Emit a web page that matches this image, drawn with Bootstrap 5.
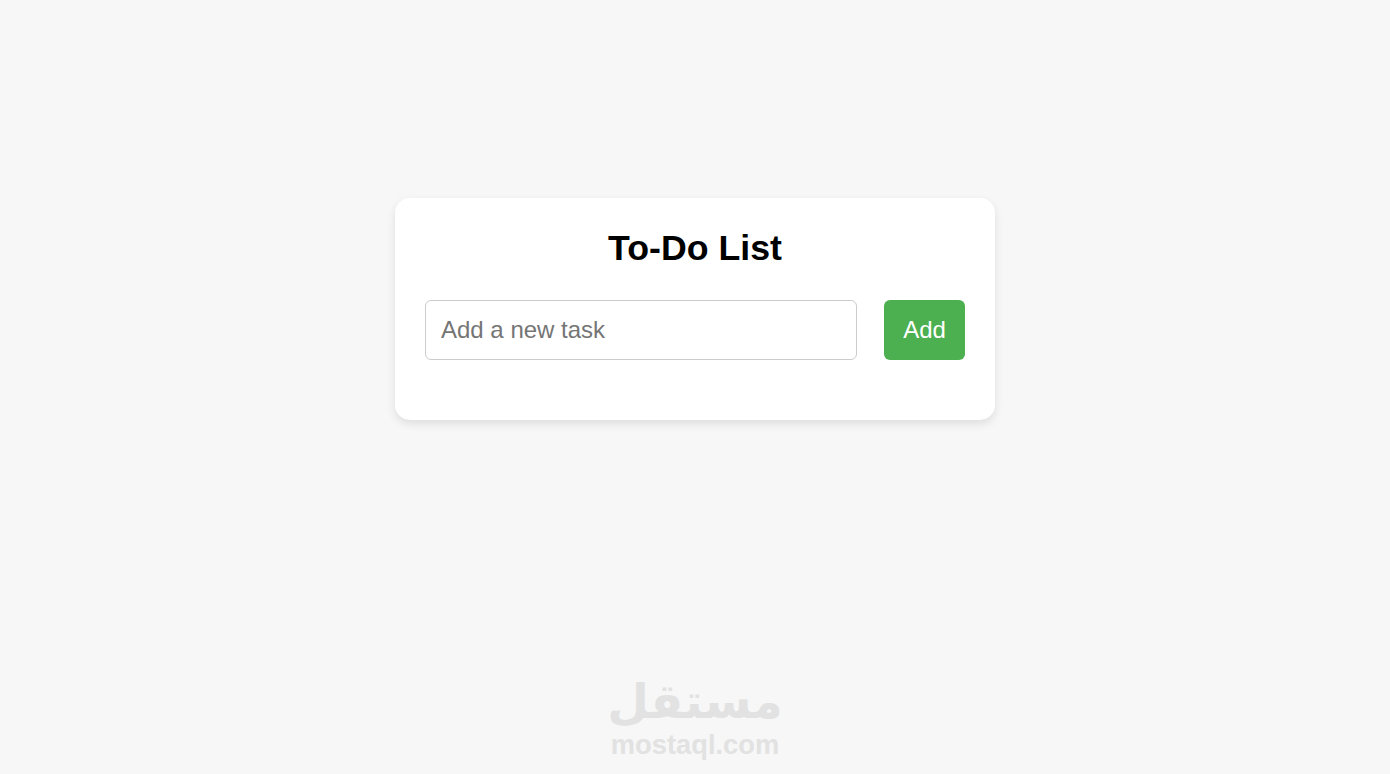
<!DOCTYPE html>
<html lang="en">
<head>
<meta charset="utf-8">
<title>To-Do List</title>
<link href="https://cdn.jsdelivr.net/npm/bootstrap@5.3.0/dist/css/bootstrap.min.css" rel="stylesheet">
<style>
html, body { height: 100%; }
body { background: #f7f7f7; font-family: "Liberation Sans", Arial, sans-serif; overflow: hidden; position: relative; }
.page-wrap { padding-top: 198px; }
.todo-card { width: 600px; height: 222px; padding: 30px; border: 0; border-radius: 15px; box-shadow: 0 4px 10px rgba(0,0,0,.1); }
.todo-title { font-family: inherit; font-size: 35.7px; font-weight: 700; line-height: 41px; color: #000; margin: 0 0 31px; text-align: center; }
.task-row { gap: 27px; }
.task-input { height: 60px; font-size: 24px; padding: 0 15px; border: 1px solid #ccc; border-radius: 6px; color: #333; }
.task-input::placeholder { color: #757575; }
.task-add { height: 60px; width: 81px; padding: 0; font-size: 24px; background: #4caf50; border: 0; border-radius: 6px; color: #fff; }
.task-add:hover { background: #4caf50; color: #fff; }
.brand-mark { position: absolute; left: 0; right: 0; top: 673px; text-align: center; color: #e2e2e2; font-weight: 700; pointer-events: none; }
.brand-ar { font-family: "DejaVu Sans", sans-serif; font-size: 48px; line-height: 56px; height: 56px; }
.brand-en { font-family: "Liberation Sans", sans-serif; font-size: 27.3px; line-height: 32px; }
</style>
</head>
<body>
<main class="page-wrap d-flex justify-content-center">
  <div class="card todo-card bg-white">
    <h1 class="todo-title">To-Do List</h1>
    <div class="d-flex task-row">
      <input type="text" class="form-control task-input flex-grow-1" placeholder="Add a new task">
      <button type="button" class="btn task-add flex-shrink-0">Add</button>
    </div>
  </div>
</main>
<div class="brand-mark">
  <div class="brand-ar" dir="rtl" lang="ar">مستقل</div>
  <div class="brand-en">mostaql.com</div>
</div>
<script src="https://cdn.jsdelivr.net/npm/bootstrap@5.3.0/dist/js/bootstrap.bundle.min.js"></script>
</body>
</html>
